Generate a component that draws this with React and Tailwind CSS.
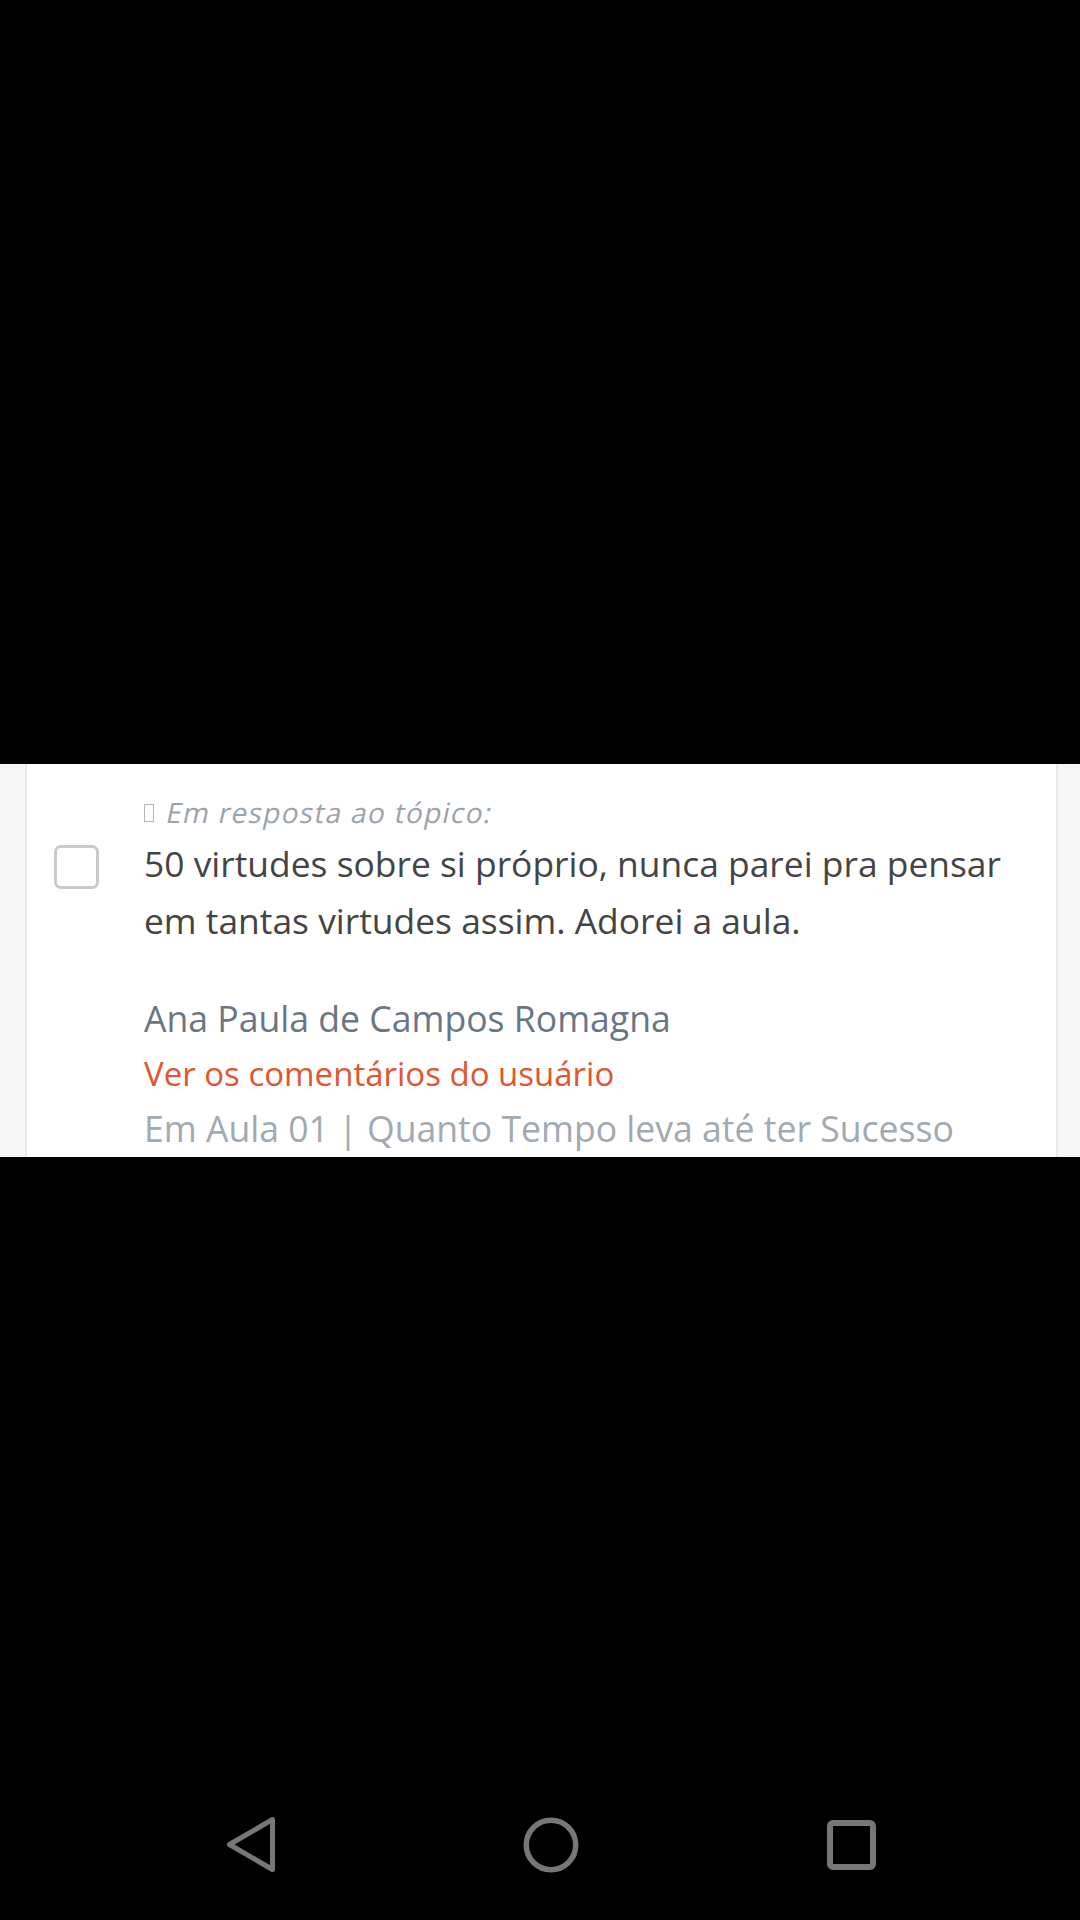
import React from 'react';

function NavBar() {
    return (
        <nav className="h-[150px] flex items-center justify-center gap-[240px] pl-[22px]">
            <svg width="60" height="60" viewBox="0 0 60 60">
                <polygon points="8.5,29.5 51.5,4.5 51.5,54.5" fill="none" stroke="#777" strokeWidth="5" strokeLinejoin="round" />
            </svg>
            <svg width="60" height="60" viewBox="0 0 60 60">
                <circle cx="30" cy="30" r="24.75" fill="none" stroke="#777" strokeWidth="5.5" />
            </svg>
            <svg width="60" height="60" viewBox="0 0 60 60">
                <rect x="9" y="8" width="43" height="44" rx="3" fill="none" stroke="#777" strokeWidth="6" />
            </svg>
        </nav>
    );
}

export default function App() {
    return (
        <div className="h-[1920px] bg-black flex flex-col" style={{ fontFamily: '"Open Sans", sans-serif' }}>
            <div className="h-[764px]" />

            <section className="h-[393px] overflow-hidden flex">
                <div className="w-[27px] bg-[#f7f7f7] border-r-2 border-[#e8e8e8]" />
                <div className="flex-1 bg-white flex pl-[27px] pr-[20px]">
                    <div className="w-[90px] pt-[81px]">
                        <div className="w-[45px] h-[44px] rounded-[7px] border-[3px] border-[#cacaca]" />
                    </div>
                    <div className="flex-1 pt-[29px]">
                        <p className="text-[28px] leading-[38px] text-[#9ba2aa] flex items-center">
                            <span className="inline-block w-[10px] h-[18px] border border-[#b5b5b5] mr-[13px] mt-[2px]" />
                            <span className="inline-block -skew-x-12 tracking-[1.3px]">Em resposta ao tópico:</span>
                        </p>
                        <p className="mt-[4px] text-[35.4px] leading-[57px] text-[#444]">
                            50 virtudes sobre si próprio, nunca parei pra pensar em tantas virtudes assim. Adorei a aula.
                        </p>
                        <div className="mt-[42px] text-[35.6px] leading-[55px]">
                            <p className="text-[#6b7684]">Ana Paula de Campos Romagna</p>
                            <p className="text-[#e2552e] text-[33px]">Ver os comentários do usuário</p>
                            <p className="text-[#a2a9b1]">Em Aula 01 | Quanto Tempo leva até ter Sucesso</p>
                        </div>
                    </div>
                </div>
                <div className="w-[24px] bg-[#f7f7f7] border-l-2 border-[#e8e8e8]" />
            </section>

            <div className="flex-1" />
            <NavBar />
        </div>
    );
}
